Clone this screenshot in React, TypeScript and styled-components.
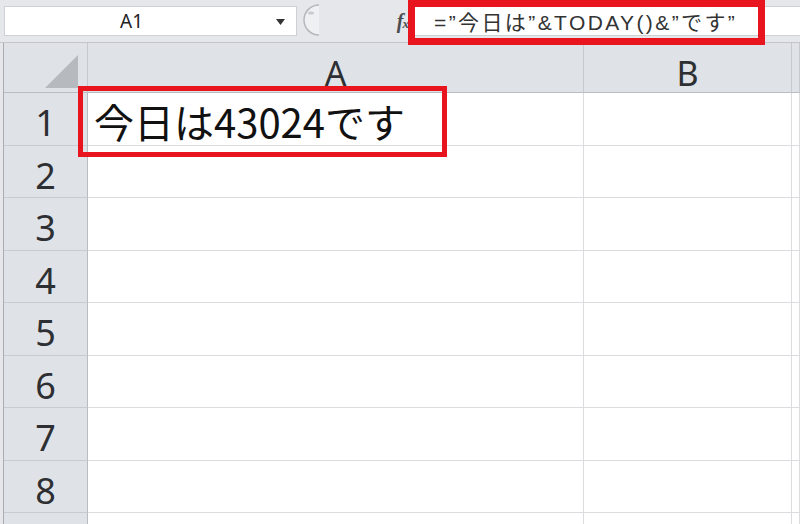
import React from "react";
import styled, { createGlobalStyle } from "styled-components";

const GlobalStyle = createGlobalStyle`
  html, body {
    margin: 0;
    padding: 0;
    background: #fff;
  }
  body {
    width: 800px;
    height: 524px;
    overflow: hidden;
    font-family: "Noto Sans", "Noto Sans CJK JP", sans-serif;
  }
`;

const Window = styled.div`
  width: 800px;
  height: 524px;
  overflow: hidden;
  display: flex;
  flex-direction: column;
  background: #e5e7ea;
`;

const FormulaBar = styled.div`
  height: 43px;
  box-sizing: border-box;
  padding: 6px 0 6px 4px;
  display: flex;
  border-bottom: 1px solid #c2c5ca;
`;

const NameBox = styled.div`
  width: 293px;
  box-sizing: border-box;
  background: #fff;
  border: 1px solid #cdd0d4;
  display: flex;
  align-items: center;
`;

const NameText = styled.span`
  flex: 1;
  text-align: center;
  padding-right: 18px;
  font-family: "Noto Sans", sans-serif;
  font-size: 19px;
  color: #222;
`;

const Arrow = styled.svg`
  width: 9px;
  height: 6px;
  margin-right: 11px;
  margin-top: 2px;
`;

const Splitter = styled.div`
  width: 113px;
  display: flex;
  align-items: center;
`;

const Knob = styled.svg`
  width: 24px;
  height: 32px;
  margin-top: -2px;
`;

const Fx = styled.span`
  margin-left: auto;
  margin-right: 2px;
  font-family: "Liberation Serif", serif;
  font-style: italic;
  font-weight: bold;
  font-size: 20px;
  color: #4a4d52;
  letter-spacing: -1px;

  small {
    font-size: 13px;
  }
`;

const FormulaInput = styled.div`
  flex: 1;
  position: relative;
  background: #fff;
  border: 1px solid #cdd0d4;
  border-right: none;
  display: flex;
  align-items: center;
  padding-left: 23px;
  font-family: "Liberation Sans", "Noto Sans CJK JP", sans-serif;
  font-size: 21px;
  letter-spacing: 2.4px;
  color: #333;
  white-space: nowrap;
`;

const Highlight = styled.div<{ $left: number; $top: number; $width: number; $height: number; $thick: number }>`
  position: absolute;
  left: ${(p) => p.$left}px;
  top: ${(p) => p.$top}px;
  width: ${(p) => p.$width}px;
  height: ${(p) => p.$height}px;
  box-sizing: border-box;
  border: ${(p) => p.$thick}px solid #e8141e;
  pointer-events: none;
  z-index: 2;
`;

const Sheet = styled.div`
  flex: 1;
  display: grid;
  grid-template-columns: 84px 496px 208px 1fr;
  grid-template-rows: 50px repeat(9, 52.5px);
  margin-left: 3px;
  border-left: 1px solid #a9adb3;
  background: #fff;
`;

const HeaderCell = styled.div`
  box-sizing: border-box;
  background: #dfe2e6;
  border-right: 1px solid #c5c8cd;
  border-bottom: 1px solid #b9bcc1;
  display: flex;
  align-items: center;
  justify-content: center;
  padding-top: 10px;
  font-family: "Noto Sans", sans-serif;
  font-size: 34px;
  color: #2d2f33;
`;

const Corner = styled(HeaderCell)`
  align-items: flex-end;
  justify-content: flex-end;
  padding: 0 9px 4px 0;
`;

const RowHead = styled.div`
  box-sizing: border-box;
  background: #dfe2e6;
  border-right: 1px solid #b9bcc1;
  border-bottom: 1px solid #c8cbd0;
  display: flex;
  align-items: center;
  justify-content: center;
  padding-top: 8px;
  font-family: "Noto Sans", sans-serif;
  font-size: 36px;
  color: #2d2f33;
`;

const Cell = styled.div`
  position: relative;
  box-sizing: border-box;
  border-right: 1px solid #dadcdf;
  border-bottom: 1px solid #dadcdf;
  display: flex;
  align-items: center;
  padding: 4px 0 0 6px;
  font-family: "Noto Sans CJK JP", sans-serif;
  font-size: 40px;
  color: #111;
  white-space: nowrap;
`;

const columns = ["A", "B", ""];
// the ninth row is only a sliver at the bottom edge, its number is out of view
const rows = ["1", "2", "3", "4", "5", "6", "7", "8", ""];

export default function App() {
  return (
    <>
      <GlobalStyle />
      <Window>
        <FormulaBar>
          <NameBox>
            <NameText>A1</NameText>
            <Arrow viewBox="0 0 9 6">
              <path d="M0 0 L9 0 L4.5 6 Z" fill="#333" />
            </Arrow>
          </NameBox>
          <Splitter>
            <Knob viewBox="0 0 24 32">
              <path d="M22 1 A 15 15 0 0 0 22 31" fill="#eef0f2" stroke="#b4b8bd" strokeWidth="1.5" />
              <ellipse cx="14" cy="9" rx="3" ry="1.5" fill="#c8ccd0" />
            </Knob>
            <Fx>
              f<small>x</small>
            </Fx>
          </Splitter>
          <FormulaInput>
            =”今日は”&amp;TODAY()&amp;”です”
            <Highlight $left={-3} $top={-7} $width={357} $height={45} $thick={7} />
          </FormulaInput>
        </FormulaBar>
        <Sheet>
          <Corner>
            <svg width="33" height="33" viewBox="0 0 33 33">
              <path d="M33 0 L33 33 L0 33 Z" fill="#b6babf" />
            </svg>
          </Corner>
          {columns.map((c, i) => (
            <HeaderCell key={i}>{c}</HeaderCell>
          ))}
          {rows.map((r, ri) => (
            <React.Fragment key={ri}>
              <RowHead>{r}</RowHead>
              {columns.map((c, i) => (
                <Cell key={c + i}>
                  {ri === 0 && i === 0 && (
                    <>
                      今日は43024です
                      <Highlight $left={-10} $top={-7} $width={369} $height={71} $thick={5} />
                    </>
                  )}
                </Cell>
              ))}
            </React.Fragment>
          ))}
        </Sheet>
      </Window>
    </>
  );
}
